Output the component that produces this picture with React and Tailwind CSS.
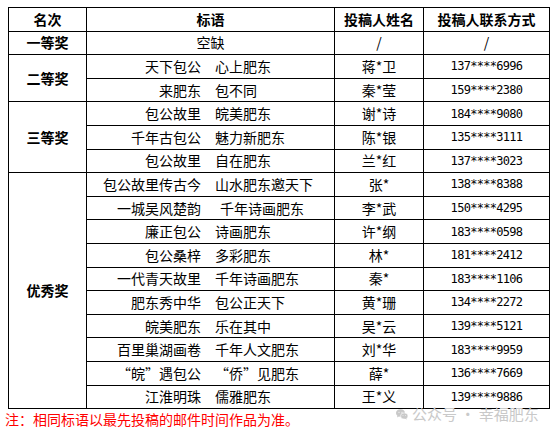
import React from 'react';

const cjk = { fontFamily: '"Noto Sans CJK SC", sans-serif' };

const prizes = [
  { label: '一等奖', rows: [{ slogan: null, name: '/', phone: '/' }] },
  {
    label: '二等奖',
    rows: [
      { slogan: ['天下包公', '心上肥东'], name: '蒋*卫', phone: '137****6996' },
      { slogan: ['来肥东', '包不同'], name: '秦*莹', phone: '159****2380' },
    ],
  },
  {
    label: '三等奖',
    rows: [
      { slogan: ['包公故里', '皖美肥东'], name: '谢*诗', phone: '184****9080' },
      { slogan: ['千年古包公', '魅力新肥东'], name: '陈*银', phone: '135****3111' },
      { slogan: ['包公故里', '自在肥东'], name: '兰*红', phone: '137****3023' },
    ],
  },
  {
    label: '优秀奖',
    rows: [
      { slogan: ['包公故里传古今', '山水肥东邀天下'], name: '张*', phone: '138****8388' },
      { slogan: ['一城吴风楚韵', '千年诗画肥东'], name: '李*武', phone: '150****4295', wide: true },
      { slogan: ['廉正包公', '诗画肥东'], name: '许*纲', phone: '183****0598' },
      { slogan: ['包公桑梓', '多彩肥东'], name: '林*', phone: '181****2412' },
      { slogan: ['一代青天故里', '千年诗画肥东'], name: '秦*', phone: '183****1106' },
      { slogan: ['肥东秀中华', '包公正天下'], name: '黄*珊', phone: '134****2272' },
      { slogan: ['皖美肥东', '乐在其中'], name: '吴*云', phone: '139****5121' },
      { slogan: ['百里巢湖画卷', '千年人文肥东'], name: '刘*华', phone: '183****9959' },
      { slogan: ['“皖”遇包公', '“侨”见肥东'], name: '薛*', phone: '136****7669' },
      { slogan: ['江淮明珠', '儒雅肥东'], name: '王*义', phone: '139****9886' },
    ],
  },
];

const spans = { 1: 'row-span-1', 2: 'row-span-2', 3: 'row-span-3', 10: 'row-span-10' };

const Cell = ({ className = '', children }) => (
  <div className={`bg-white flex items-center justify-center text-[14px] text-black ${className}`}>
    {children}
  </div>
);

const Slogan = ({ slogan, wide }) =>
  slogan ? (
    <div className={`bg-white grid items-center text-[14px] text-black whitespace-nowrap ${wide ? 'grid-cols-[114px_1fr] gap-[19px]' : 'grid-cols-[114px_1fr] gap-[14px]'}`}>
      <span className="text-right">{slogan[0]}</span>
      <span>{slogan[1]}</span>
    </div>
  ) : (
    <Cell>空缺</Cell>
  );

const WeChatIcon = () => (
  <svg width="12" height="11" viewBox="0 0 24 22" fill="#c9c9c9">
    <ellipse cx="9" cy="8" rx="9" ry="7.5" />
    <path d="M3 13 L2 17 L7 14 Z" />
    <ellipse cx="16.5" cy="14" rx="7.5" ry="6.2" fill="#c9c9c9" stroke="#fff" strokeWidth="1.2" />
    <path d="M20 18 L22 21 L17 19 Z" />
    <circle cx="6" cy="6.5" r="1.1" fill="#fff" />
    <circle cx="12" cy="6.5" r="1.1" fill="#fff" />
    <circle cx="14" cy="13" r="0.9" fill="#fff" />
    <circle cx="19" cy="13" r="0.9" fill="#fff" />
  </svg>
);

export default function App() {
  return (
    <div className="relative w-[559px] h-[434px] bg-white overflow-hidden" style={cjk}>
      <div className="pt-[7px] pl-[8px]">
        <div className="w-[542px] grid grid-cols-[77px_247px_88px_125px] auto-rows-[22.6px] gap-px bg-black border border-black">
          <Cell className="bg-[#ffc000] font-bold">名次</Cell>
          <Cell className="bg-[#ffc000] font-bold">标语</Cell>
          <Cell className="bg-[#ffc000] font-bold">投稿人姓名</Cell>
          <Cell className="bg-[#ffc000] font-bold">投稿人联系方式</Cell>
          {prizes.map((p) =>
            p.rows.map((r, i) => (
              <React.Fragment key={p.label + i}>
                {i === 0 && (
                  <Cell className={`font-bold ${spans[p.rows.length]}`}>{p.label}</Cell>
                )}
                <Slogan slogan={r.slogan} wide={r.wide} />
                <Cell>{r.name}</Cell>
                <Cell>
                  {r.phone === '/' ? (
                    r.phone
                  ) : (
                    <span className="text-[12px] tracking-[-0.7px]" style={{ fontFamily: '"DejaVu Sans Mono", monospace' }}>
                      {r.phone}
                    </span>
                  )}
                </Cell>
              </React.Fragment>
            ))
          )}
        </div>
      </div>
      <p className="pl-[5px] text-[14px] leading-[20px] text-[#ff0000]">
        注：相同标语以最先投稿的邮件时间作品为准。
      </p>
      <div className="absolute left-[396px] top-[403px] flex items-center gap-[4px] text-[15px] text-[#c9c9c9]">
        <WeChatIcon />
        <span>公众号 · 幸福肥东</span>
      </div>
    </div>
  );
}
